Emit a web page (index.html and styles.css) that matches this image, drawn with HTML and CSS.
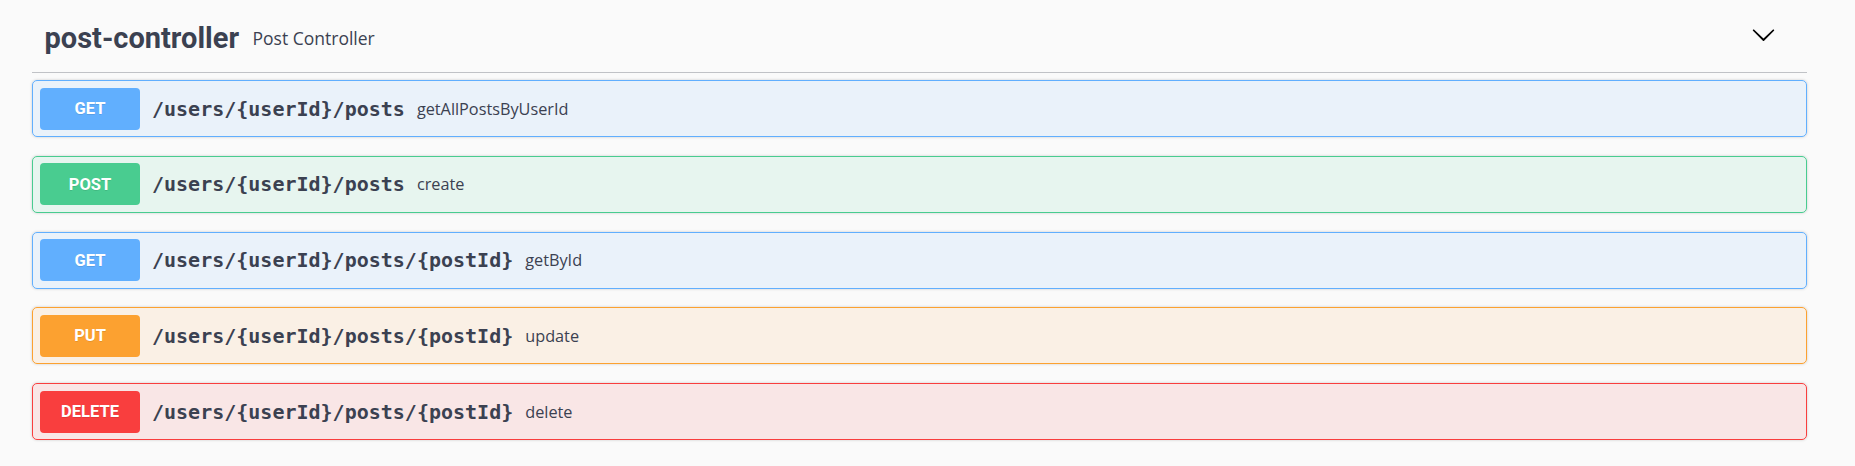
FILE: index.html
```html
<!DOCTYPE html>
<html lang="en">
<head>
<meta charset="utf-8">
<title>post-controller</title>
<link rel="stylesheet" href="styles.css">
</head>
<body>
<div class="wrapper">
  <section class="tag-section">
    <div class="tag-header">
      <h3 class="tag-title">post-controller</h3>
      <span class="tag-desc">Post Controller</span>
      <span class="spacer"></span>
      <svg class="chevron" viewBox="0 0 20 20" width="25" height="25" aria-hidden="true">
        <path d="M17.418 6.109c.272-.268.709-.268.979 0s.271.701 0 .969l-7.908 7.83c-.27.268-.707.268-.979 0l-7.908-7.830c-.27-.268-.27-.701 0-.969.271-.268.709-.268.979 0L10 13.25l7.418-7.141z"/>
      </svg>
    </div>
    <div class="ops">
      <div class="op op-get">
        <span class="method">GET</span>
        <span class="path">/users/{userId}/posts</span>
        <span class="desc">getAllPostsByUserId</span>
      </div>
      <div class="op op-post">
        <span class="method">POST</span>
        <span class="path">/users/{userId}/posts</span>
        <span class="desc">create</span>
      </div>
      <div class="op op-get">
        <span class="method">GET</span>
        <span class="path">/users/{userId}/posts/{postId}</span>
        <span class="desc">getById</span>
      </div>
      <div class="op op-put">
        <span class="method">PUT</span>
        <span class="path">/users/{userId}/posts/{postId}</span>
        <span class="desc">update</span>
      </div>
      <div class="op op-delete">
        <span class="method">DELETE</span>
        <span class="path">/users/{userId}/posts/{postId}</span>
        <span class="desc">delete</span>
      </div>
    </div>
  </section>
</div>
</body>
</html>
```
FILE: styles.css
```css
html, body {
  margin: 0;
  padding: 0;
  background: #fafafa;
}

body {
  font-family: "Open Sans", "Noto Sans", sans-serif;
  color: #3b4151;
}

.wrapper {
  padding: 0 48px 0 32px;
}

.tag-header {
  display: flex;
  align-items: center;
  height: 73px;
  box-sizing: border-box;
  padding: 4px 31px 0 12.5px;
  border-bottom: 1px solid rgba(59, 65, 81, 0.3);
}

.tag-title {
  margin: 0;
  font-family: Roboto, "Open Sans", sans-serif;
  font-weight: 700;
  font-size: 29px;
  color: #3b4151;
}

.tag-desc {
  padding-left: 13.5px;
  font-size: 17.5px;
  color: #3b4151;
}

.spacer {
  flex: 1;
}

.chevron {
  display: block;
  fill: #000;
  margin-bottom: 7px;
}

.ops {
  padding-top: 7px;
}

.op {
  display: flex;
  align-items: center;
  height: 57px;
  box-sizing: border-box;
  margin-bottom: 18.75px;
  padding: 0 7px;
  border: 1px solid;
  border-radius: 5px;
  box-shadow: 0 0 3px rgba(0, 0, 0, 0.19);
}

.method {
  display: flex;
  align-items: center;
  justify-content: center;
  width: 100px;
  height: 42px;
  border-radius: 4px;
  color: #fff;
  font-family: Roboto, "Open Sans", sans-serif;
  font-weight: 700;
  font-size: 16.5px;
  text-shadow: 0 1px 0 rgba(0, 0, 0, 0.1);
}

.path {
  padding: 0 12px;
  font-family: "DejaVu Sans Mono", monospace;
  font-weight: 700;
  font-size: 20px;
  color: #3b4151;
}

.desc {
  font-size: 16.25px;
  color: #3b4151;
}

.op-get {
  border-color: #61affe;
  background: rgba(97, 175, 254, 0.1);
}
.op-get .method { background: #61affe; }

.op-post {
  border-color: #49cc90;
  background: rgba(73, 204, 144, 0.1);
}
.op-post .method { background: #49cc90; }

.op-put {
  border-color: #fca130;
  background: rgba(252, 161, 48, 0.1);
}
.op-put .method { background: #fca130; }

.op-delete {
  border-color: #f93e3e;
  background: rgba(249, 62, 62, 0.1);
}
.op-delete .method { background: #f93e3e; }
```
